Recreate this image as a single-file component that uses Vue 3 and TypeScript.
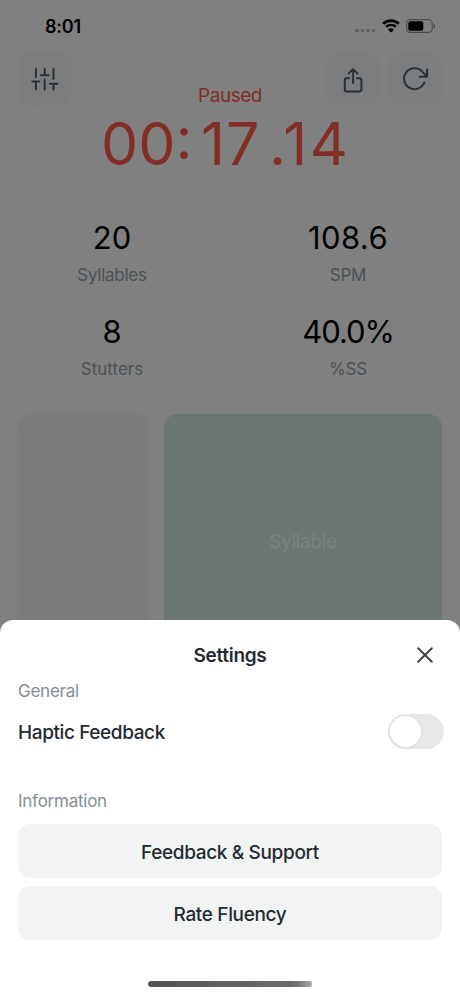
<script setup lang="ts">
import { ref } from 'vue'

interface Stat {
  value: string
  label: string
  kind?: string
}

const stats: Stat[] = [
  { value: '20', label: 'Syllables' },
  { value: '108.6', label: 'SPM', kind: 'rate' },
  { value: '8', label: 'Stutters', kind: 'count' },
  { value: '40.0%', label: '%SS', kind: 'percent' },
]

const links: string[] = ['Feedback & Support', 'Rate Fluency']
const haptic = ref(false)
</script>

<template>
  <div class="screen">
    <div class="status">
      <span class="clock">8:01</span>
      <div class="indicators">
        <div class="dots"><i v-for="n in 4" :key="n"></i></div>
        <svg class="wifi" width="18" height="14" viewBox="0 0 18 14">
          <path d="M1.2 4.7a11.2 11.2 0 0 1 15.6 0" fill="none" stroke="#000" stroke-width="2.7" />
          <path d="M4.1 7.9a7 7 0 0 1 9.8 0" fill="none" stroke="#000" stroke-width="2.4" />
          <path d="M9 13.6 6 10.7a4.4 4.4 0 0 1 6 0z" />
        </svg>
        <svg class="battery" width="30" height="14" viewBox="0 0 30 14">
          <rect x=".6" y=".6" width="25.6" height="12.8" rx="3.8" fill="none" stroke="#4b4b4b" stroke-width="1.1" />
          <rect x="2.3" y="2.3" width="15" height="9.4" rx="2" />
          <path d="M27.6 4.7v4.6q1.7-.7 1.7-2.3t-1.7-2.3" fill="#4b4b4b" />
        </svg>
      </div>
    </div>

    <div class="toolbar">
      <button class="tool" aria-label="Settings">
        <svg width="52" height="52" viewBox="0 0 52 52">
          <path d="M16.9 16v8M16.9 29.3v7.2M13.2 28.4h7.2M25.7 16v5.6M21.9 22.2h7.6M25.7 26.5v10M34.5 16v10M34.5 31.5v5M31 30.7h7.4" />
        </svg>
      </button>
      <button class="tool share" aria-label="Share">
        <svg width="52" height="52" viewBox="0 0 52 52">
          <path d="M22 25.2h-2.2a2 2 0 0 0-2 2v9.4a2 2 0 0 0 2 2h12.6a2 2 0 0 0 2-2v-9.4a2 2 0 0 0-2-2H30M26.1 30V16.5M21.6 20.6l4.5-4.5 4.5 4.5" />
        </svg>
      </button>
      <button class="tool" aria-label="Reset">
        <svg width="52" height="52" viewBox="0 0 52 52">
          <path d="M35.3 29.6A10.5 10.5 0 1 1 33.6 18.9l4 4.3M38.1 16.5v7.2h-7.4" />
        </svg>
      </button>
    </div>

    <div class="timer">
      <div class="state">Paused</div>
      <div class="time">
        <span class="minutes">00:</span>
        <span class="seconds">17</span>
        <span class="hundredths">.14</span>
      </div>
    </div>

    <div class="stats">
      <div v-for="s in stats" :key="s.label" class="stat" :class="s.kind">
        <div class="value">{{ s.value }}</div>
        <div class="label">{{ s.label }}</div>
      </div>
    </div>

    <div class="pads">
      <div class="pad stutter"></div>
      <div class="pad syllable"><span>Syllable</span></div>
    </div>

    <section class="sheet">
      <header class="sheet-head">
        <h1>Settings</h1>
        <svg class="close" width="18" height="18" viewBox="0 0 18 18">
          <path d="M2.2 2.2l13.6 13.6M15.8 2.2 2.2 15.8" />
        </svg>
      </header>
      <h2 class="general">General</h2>
      <div class="row">
        <span class="haptic">Haptic Feedback</span>
        <button class="switch" :class="{ on: haptic }" aria-label="Haptic Feedback" @click="haptic = !haptic">
          <i></i>
        </button>
      </div>
      <h2 class="info">Information</h2>
      <div class="links">
        <button v-for="l in links" :key="l" class="link">{{ l }}</button>
      </div>
      <div class="home"></div>
    </section>
  </div>
</template>

<style>
body {
  background: #808080;
}
</style>

<style scoped>
* {
  box-sizing: border-box;
}
button {
  border: 0;
  padding: 0;
  font: inherit;
  color: inherit;
}
.screen {
  position: relative;
  width: 460px;
  height: 996px;
  overflow: hidden;
  background: #808080;
  font-family: Inter, "Liberation Sans", sans-serif;
}
.status {
  height: 53px;
  padding: 0 24px 0 45px;
  display: flex;
  align-items: center;
  justify-content: space-between;
}
.clock {
  font-size: 18px;
  line-height: 20px;
  font-weight: 600;
  letter-spacing: -0.2px;
}
.indicators {
  display: flex;
  align-items: center;
  margin-top: -2px;
}
.dots {
  display: flex;
  gap: 2px;
  margin: 10px 7px 0 0;
}
.dots i {
  width: 3.5px;
  height: 3.5px;
  border-radius: 1px;
  background: #626262;
}
.wifi {
  margin-right: 6px;
}
.toolbar {
  display: flex;
  height: 52px;
  padding: 0 19px;
  gap: 10px;
}
.tool {
  width: 52px;
  height: 52px;
  border-radius: 14px;
  background: #7c7d7e;
  box-shadow: 0 0 3px #7c7d7e;
}
.tool svg {
  display: block;
  fill: none;
  stroke: #2c3033;
  stroke-width: 2;
  stroke-linecap: round;
  stroke-linejoin: round;
}
.share {
  margin-left: auto;
}
.timer {
  margin-top: -21px;
  height: 94px;
  color: #812f26;
}
.state {
  text-align: center;
  font-size: 19px;
  line-height: 23px;
  letter-spacing: -0.5px;
}
.time {
  display: flex;
  padding-left: 101px;
  font-size: 59px;
  line-height: 74px;
}
.minutes {
  width: 100px;
}
.seconds {
  width: 68px;
  letter-spacing: 1px;
}
.hundredths {
  letter-spacing: 2.4px;
}
.stats {
  display: grid;
  grid-template-columns: 224px 224px;
  column-gap: 12px;
  margin-top: 39px;
  height: 188px;
  grid-auto-rows: 94px;
}
.stat {
  text-align: center;
}
.value {
  font-size: 31px;
  line-height: 42px;
}
.rate .value {
  letter-spacing: 0.4px;
}
.percent .value {
  letter-spacing: -1.1px;
}
.label {
  font-size: 17px;
  line-height: 20px;
  margin-top: 6px;
  letter-spacing: -0.25px;
  color: #4b5256;
}
.count .label {
  letter-spacing: 0;
}
.pads {
  display: flex;
  gap: 16px;
  margin-top: 9px;
  padding: 0 18px;
  height: 254px;
}
.pad {
  border-radius: 14px;
}
.stutter {
  width: 130px;
  background: #7c7c7c;
  box-shadow: 0 0 2px #7c7c7c;
}
.syllable {
  flex: 1;
  display: flex;
  align-items: center;
  justify-content: center;
  background: #6b7673;
  color: #7c8180;
  font-size: 19px;
  letter-spacing: -0.3px;
}
.sheet {
  position: absolute;
  left: 0;
  right: 0;
  bottom: 0;
  height: 376px;
  padding: 0 18px;
  border-radius: 13px 13px 0 0;
  background: #fff;
  color: #222b31;
}
.sheet-head {
  display: grid;
  grid-template-columns: 1fr auto 1fr;
  align-items: center;
  height: 58px;
  padding-top: 12px;
}
h1 {
  grid-column: 2;
  margin: 2px 0 0;
  font-size: 19px;
  line-height: 24px;
  font-weight: 600;
  letter-spacing: -0.3px;
}
.close {
  justify-self: end;
  margin-right: 8px;
  fill: none;
  stroke: #3d4246;
  stroke-width: 2;
  stroke-linecap: round;
}
h2 {
  margin: 0;
  font-size: 17px;
  line-height: 20px;
  font-weight: 400;
  letter-spacing: -0.25px;
  color: #838d97;
}
.general {
  margin-top: 3px;
}
.row {
  display: flex;
  align-items: center;
  justify-content: space-between;
  margin: 13px -2px 0 0;
  height: 35px;
  font-size: 19px;
  font-weight: 500;
  letter-spacing: -0.4px;
}
.haptic {
  padding-top: 1px;
}
.switch {
  width: 56px;
  height: 35px;
  padding: 2px;
  border-radius: 18px;
  background: #e8e8ea;
}
.switch i {
  display: block;
  width: 31px;
  height: 31px;
  border-radius: 50%;
  background: #fff;
  box-shadow: 0 1px 4px rgba(0, 0, 0, 0.08);
}
.switch.on {
  background: #34c759;
}
.switch.on i {
  margin-left: 21px;
}
.info {
  margin-top: 42px;
}
.links {
  display: grid;
  grid-auto-rows: 54px;
  row-gap: 8px;
  margin-top: 13px;
}
.link {
  padding-top: 2px;
  border-radius: 12px;
  background: #f2f4f4;
  font-size: 19px;
  font-weight: 500;
  letter-spacing: -0.35px;
}
.home {
  width: 164px;
  height: 6px;
  margin: 41px auto 0;
  border-radius: 3px;
  background: linear-gradient(90deg, #555, #6a6a6a 88%, #a3a3a3);
}
</style>
